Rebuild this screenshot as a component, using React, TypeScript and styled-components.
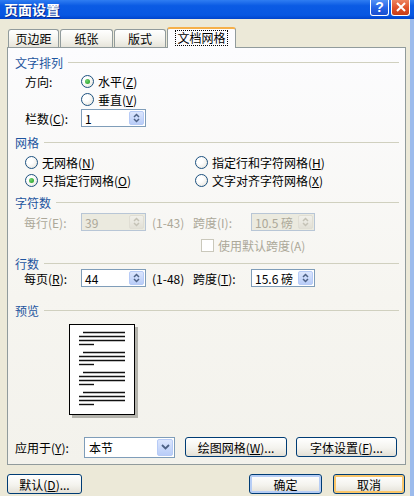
import React from "react";
import styled, { createGlobalStyle, css } from "styled-components";

const GlobalStyle = createGlobalStyle`
  html, body {
    margin: 0;
    padding: 0;
  }
  body {
    width: 414px;
    height: 496px;
    overflow: hidden;
    background: #ece9d8;
    font-family: "Noto Sans CJK SC", "Liberation Sans", sans-serif;
    font-size: 12px;
    color: #000;
  }
  u {
    text-decoration-thickness: 1px;
    text-underline-offset: 1px;
  }
`;

const Window = styled.div`
  width: 414px;
  height: 496px;
  display: flex;
  flex-direction: column;
  background: #ece9d8;
`;

const TitleBar = styled.div`
  height: 19px;
  flex-shrink: 0;
  display: flex;
  align-items: flex-start;
  justify-content: space-between;
  padding: 0 4px 0 4px;
  background: linear-gradient(#2f7df2 0%, #0b5be4 30%, #0757e2 80%, #0044cc 100%);
`;

const Title = styled.div`
  color: #fff;
  font-size: 14px;
  font-weight: bold;
  line-height: 18px;
  height: 18px;
  text-shadow: 1px 1px 0 #0a2a8a;
`;

const TitleButtons = styled.div`
  display: flex;
  gap: 2px;
`;

const CapButton = styled.div<{ $red?: boolean }>`
  width: 19px;
  height: 17px;
  margin-top: -1px;
  box-sizing: border-box;
  border: 1px solid #fff;
  border-top: none;
  border-radius: 0 0 3px 3px;
  display: flex;
  align-items: center;
  justify-content: center;
  color: #fff;
  font-family: "Liberation Sans", sans-serif;
  font-weight: bold;
  font-size: 14px;
  background: ${(p) =>
    p.$red
      ? "linear-gradient(#ef8a66, #e0522a 55%, #c83c16)"
      : "linear-gradient(#5a98f8, #2564e6 55%, #1a4fd0)"};
`;

const Body = styled.div`
  flex: 1;
  display: flex;
  flex-direction: column;
  padding: 8px 4px 0 7px;
  border-right: 4px solid #9cbbec;
  min-height: 0;
`;

const Tabs = styled.div`
  height: 20px;
  display: flex;
  align-items: flex-end;
  gap: 1px;
  padding-left: 1px;
  position: relative;
  z-index: 1;
`;

const Tab = styled.div<{ $w: number; $active?: boolean }>`
  width: ${(p) => p.$w}px;
  box-sizing: border-box;
  height: 18px;
  border: 1px solid #919b9c;
  border-bottom: none;
  border-radius: 3px 3px 0 0;
  display: flex;
  align-items: center;
  justify-content: center;
  background: linear-gradient(#ffffff, #f3f2ec 60%, #e6e4da);
  ${(p) =>
    p.$active &&
    css`
      height: 21px;
      margin-bottom: -1px;
      background: #fcfcfe;
      border-top: 2px solid #f6b04a;
      padding-bottom: 1px;
    `}
`;

const FocusText = styled.span`
  outline: 1px dotted #000;
  outline-offset: 0;
  padding: 0 1px;
  line-height: 14px;
`;

const Panel = styled.div`
  height: 418px;
  box-sizing: border-box;
  border: 1px solid #919b9c;
  background: linear-gradient(#fcfcfe, #f6f5f0 60%, #f3f2ec);
  display: flex;
  flex-direction: column;
  padding: 7px 0 6px 7px;
`;

const GroupHead = styled.div<{ $mt?: number; $h?: number }>`
  height: ${(p) => p.$h ?? 14}px;
  margin-top: ${(p) => p.$mt ?? 0}px;
  display: flex;
  align-items: center;
  gap: 5px;
  color: #1e559f;
  padding-right: 6px;
  &::after {
    content: "";
    flex: 1;
    height: 1px;
    background: #d0d0bf;
  }
`;

const Row = styled.div<{ $h?: number; $mt?: number; $pl?: number }>`
  height: ${(p) => p.$h ?? 18}px;
  margin-top: ${(p) => p.$mt ?? 0}px;
  padding-left: ${(p) => p.$pl ?? 10}px;
  display: flex;
  align-items: center;
  white-space: nowrap;
`;

const GridRows = styled.div<{ $mt: number }>`
  margin-top: ${(p) => p.$mt}px;
  padding-left: 10px;
  display: grid;
  grid-template-columns: 170px 1fr;
  grid-auto-rows: 18px;
  align-items: center;
`;

const Label = styled.span<{ $w?: number; $off?: boolean }>`
  width: ${(p) => (p.$w ? `${p.$w}px` : "auto")};
  flex-shrink: 0;
  color: ${(p) => (p.$off ? "#aca899" : "#000")};
`;

const Choice = styled.span<{ $off?: boolean }>`
  display: inline-flex;
  align-items: center;
  gap: 4px;
  white-space: nowrap;
  color: ${(p) => (p.$off ? "#aca899" : "#000")};
`;

const RadioDot = styled.span<{ $on?: boolean }>`
  width: 13px;
  height: 13px;
  box-sizing: border-box;
  border-radius: 50%;
  border: 1px solid #1c5180;
  background: radial-gradient(circle at 35% 35%, #ffffff 30%, #e6e4dc 90%);
  display: inline-flex;
  align-items: center;
  justify-content: center;
  &::after {
    content: "";
    display: ${(p) => (p.$on ? "block" : "none")};
    width: 5px;
    height: 5px;
    border-radius: 50%;
    background: radial-gradient(circle at 35% 35%, #6fd36f, #1f9a1f);
  }
`;

const CheckBox = styled.span<{ $off?: boolean }>`
  width: 13px;
  height: 13px;
  box-sizing: border-box;
  border: 1px solid ${(p) => (p.$off ? "#cac8bb" : "#1c5180")};
  background: #fff;
`;

const Spin = styled.div<{ $w: number; $off?: boolean }>`
  width: ${(p) => p.$w}px;
  height: 18px;
  flex-shrink: 0;
  box-sizing: border-box;
  border: 1px solid ${(p) => (p.$off ? "#b8c6d6" : "#7f9db9")};
  background: ${(p) => (p.$off ? "#ebeadf" : "#fff")};
  color: ${(p) => (p.$off ? "#aca899" : "#000")};
  display: flex;
  align-items: center;
  padding-left: 3px;
`;

const SpinValue = styled.span`
  flex: 1;
`;

const SpinBtn = styled.span<{ $off?: boolean }>`
  width: 15px;
  height: 14px;
  margin-right: 1px;
  box-sizing: border-box;
  border-radius: 2px;
  border: 1px solid ${(p) => (p.$off ? "#e0ded4" : "#b7cbf6")};
  background: ${(p) =>
    p.$off ? "linear-gradient(#f1f0ea, #e2e0d6)" : "linear-gradient(#dce6fd, #b9cdf8)"};
  display: flex;
  align-items: center;
  justify-content: center;
`;

const Range = styled.span<{ $off?: boolean }>`
  width: 41px;
  margin-left: 6px;
  flex-shrink: 0;
  color: ${(p) => (p.$off ? "#aca899" : "#000")};
`;

const PreviewBox = styled.div`
  margin: 7px 0 0 54px;
  width: 70px;
  height: 95px;
`;

const BottomRow = styled.div`
  margin-top: auto;
  height: 22px;
  display: flex;
  align-items: center;
  white-space: nowrap;
`;

const Select = styled.div`
  width: 91px;
  height: 21px;
  box-sizing: border-box;
  border: 1px solid #7f9db9;
  background: #fff;
  display: flex;
  align-items: center;
  padding-left: 4px;
  margin-right: 10px;
`;

const SelectBtn = styled.span`
  width: 16px;
  height: 17px;
  margin-right: 1px;
  box-sizing: border-box;
  border-radius: 2px;
  border: 1px solid #b7cbf6;
  background: linear-gradient(#dce6fd, #b9cdf8);
  display: flex;
  align-items: center;
  justify-content: center;
  margin-left: auto;
`;

const Button = styled.div<{ $w: number; $h?: number; $ring?: string; $ml?: number }>`
  width: ${(p) => p.$w}px;
  height: ${(p) => p.$h ?? 20}px;
  margin-left: ${(p) => p.$ml ?? 0}px;
  flex-shrink: 0;
  box-sizing: border-box;
  border: 1px solid #003c74;
  border-radius: 3px;
  background: linear-gradient(#ffffff, #f4f3ee 55%, #e3e0d6);
  display: flex;
  align-items: center;
  justify-content: center;
  white-space: nowrap;
  ${(p) =>
    p.$ring &&
    css`
      box-shadow: inset 0 0 0 2px ${p.$ring};
    `}
`;

const Footer = styled.div`
  margin-top: 9px;
  display: flex;
  align-items: center;
`;

const SpinArrows = ({ off }: { off?: boolean }) => (
  <svg width="7" height="10" viewBox="0 0 7 10">
    <path
      d="M1 4 L3.5 1.5 L6 4 M1 6 L3.5 8.5 L6 6"
      fill="none"
      stroke={off ? "#c4c2b6" : "#4d6185"}
      strokeWidth="1.5"
    />
  </svg>
);

const SpinBox = ({ value, w, off }: { value: string; w: number; off?: boolean }) => (
  <Spin $w={w} $off={off}>
    <SpinValue>{value}</SpinValue>
    <SpinBtn $off={off}>
      <SpinArrows off={off} />
    </SpinBtn>
  </Spin>
);

const Radio = ({ on, children }: { on?: boolean; children: React.ReactNode }) => (
  <Choice>
    <RadioDot $on={on} />
    <span>{children}</span>
  </Choice>
);

const PreviewPage = () => {
  const paras = [0, 1, 2, 3];
  return (
    <svg width="70" height="95" viewBox="0 0 70 95">
      <rect x="3" y="3" width="66" height="91" fill="#b4b3ac" />
      <rect x="0.5" y="0.5" width="65" height="90" fill="#fff" stroke="#000" />
      {paras.map((i) => {
        const y = 8.5 + i * 20;
        return (
          <g key={i} stroke="#111" strokeWidth="1.4">
            <line x1="14" x2="56" y1={y} y2={y} />
            <line x1="10" x2="56" y1={y + 4} y2={y + 4} />
            <line x1="10" x2="56" y1={y + 8} y2={y + 8} />
            <line x1="10" x2="25" y1={y + 12} y2={y + 12} />
          </g>
        );
      })}
    </svg>
  );
};

export default function App() {
  return (
    <>
      <GlobalStyle />
      <Window>
        <TitleBar>
          <Title>页面设置</Title>
          <TitleButtons>
            <CapButton>?</CapButton>
            <CapButton $red>
              <svg width="10" height="10" viewBox="0 0 10 10">
                <path d="M1 1 L9 9 M9 1 L1 9" stroke="#fff" strokeWidth="2" />
              </svg>
            </CapButton>
          </TitleButtons>
        </TitleBar>
        <Body>
          <Tabs>
            <Tab $w={51}>页边距</Tab>
            <Tab $w={53}>纸张</Tab>
            <Tab $w={52}>版式</Tab>
            <Tab $w={69} $active>
              <FocusText>文档网格</FocusText>
            </Tab>
          </Tabs>
          <Panel>
            <GroupHead>文字排列</GroupHead>
            <Row $mt={3}>
              <Label $w={56}>方向:</Label>
              <Radio on>
                水平(<u>Z</u>)
              </Radio>
            </Row>
            <Row>
              <Label $w={56} />
              <Radio>
                垂直(<u>V</u>)
              </Radio>
            </Row>
            <Row $h={20}>
              <Label $w={56}>
                栏数(<u>C</u>):
              </Label>
              <SpinBox value="1" w={65} />
            </Row>

            <GroupHead $mt={7}>网格</GroupHead>
            <GridRows $mt={4}>
              <Radio>
                无网格(<u>N</u>)
              </Radio>
              <Radio>
                指定行和字符网格(<u>H</u>)
              </Radio>
              <Radio on>
                只指定行网格(<u>O</u>)
              </Radio>
              <Radio>
                文字对齐字符网格(<u>X</u>)
              </Radio>
            </GridRows>

            <GroupHead $mt={6}>字符数</GroupHead>
            <Row $h={20} $mt={3} $pl={9}>
              <Label $w={57} $off>
                每行(E):
              </Label>
              <SpinBox value="39" w={65} off />
              <Range $off>(1-43)</Range>
              <Label $w={58} $off>
                跨度(I):
              </Label>
              <SpinBox value="10.5 磅" w={64} off />
            </Row>
            <Row $h={20} $mt={3} $pl={186}>
              <Choice $off>
                <CheckBox $off />
                <span>使用默认跨度(A)</span>
              </Choice>
            </Row>

            <GroupHead $mt={2} $h={12}>
              行数
            </GroupHead>
            <Row $h={18} $mt={0} $pl={9}>
              <Label $w={57}>
                每页(<u>R</u>):
              </Label>
              <SpinBox value="44" w={65} />
              <Range>(1-48)</Range>
              <Label $w={58}>
                跨度(<u>T</u>):
              </Label>
              <SpinBox value="15.6 磅" w={64} />
            </Row>

            <GroupHead $mt={16}>预览</GroupHead>
            <PreviewBox>
              <PreviewPage />
            </PreviewBox>

            <BottomRow>
              <Label $w={69}>
                应用于(<u>Y</u>):
              </Label>
              <Select>
                <span>本节</span>
                <SelectBtn>
                  <svg width="9" height="6" viewBox="0 0 9 6">
                    <path d="M1 1 L4.5 4.5 L8 1" fill="none" stroke="#4d6185" strokeWidth="1.8" />
                  </svg>
                </SelectBtn>
              </Select>
              <Button $w={102} $h={20}>
                绘图网格(<u>W</u>)...
              </Button>
              <Button $w={101} $h={20} $ml={9}>
                字体设置(<u>F</u>)...
              </Button>
            </BottomRow>
          </Panel>
          <Footer>
            <Button $w={75}>
              默认(<u>D</u>)...
            </Button>
            <Button $w={73} $ml={167} $ring="#b6cdf5">
              确定
            </Button>
            <Button $w={72} $ml={11} $ring="#f9c66a">
              取消
            </Button>
          </Footer>
        </Body>
      </Window>
    </>
  );
}
